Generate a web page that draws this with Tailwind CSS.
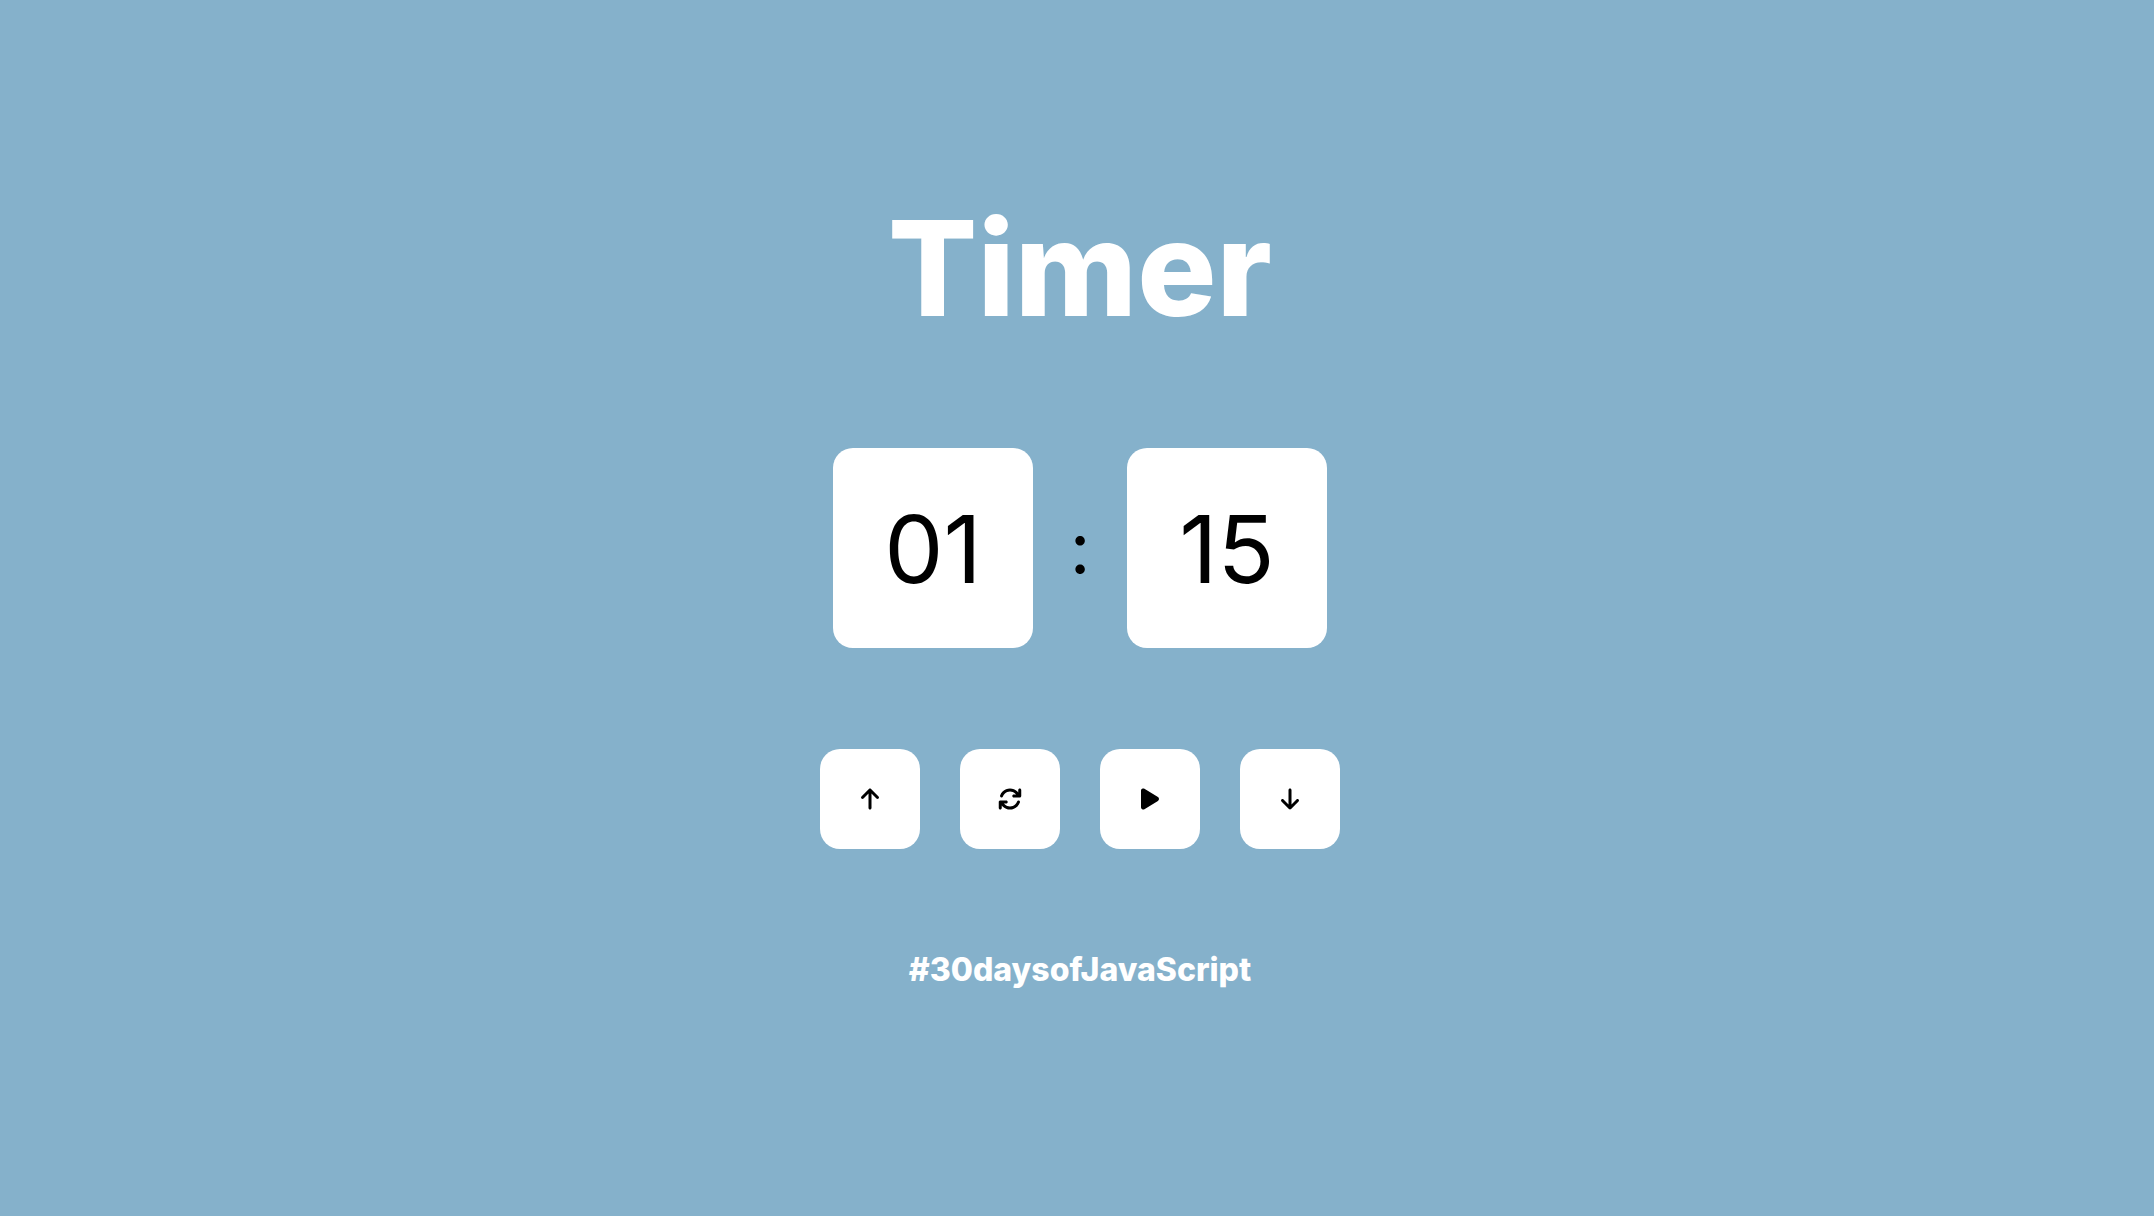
<!DOCTYPE html>
<html lang="en">
<head>
<meta charset="utf-8">
<meta name="viewport" content="width=device-width, initial-scale=1">
<title>Timer</title>
<script src="https://cdn.jsdelivr.net/npm/@tailwindcss/browser@4"></script>
</head>
<body class="min-h-screen bg-[#85b1cb] font-['Inter',sans-serif] text-black">
<main class="flex min-h-screen flex-col items-center pt-48 pl-1.5">
  <h1 class="text-[132px] leading-[152px] font-extrabold text-white">Timer</h1>
  <div role="timer" class="mt-26 flex items-center text-[94px] leading-none">
    <div class="flex size-50 items-center justify-center rounded-[20px] bg-white pt-0.5">01</div>
    <div class="w-[94px] text-center text-[72px]">:</div>
    <div class="flex size-50 items-center justify-center rounded-[20px] bg-white pt-0.5">15</div>
  </div>
  <div class="mt-[101px] flex gap-10">
    <button type="button" aria-label="Increase" class="flex size-25 items-center justify-center rounded-[20px] bg-white">
      <svg class="h-6" viewBox="0 0 384 512" fill="currentColor"><path d="M214.6 41.4c-12.5-12.5-32.8-12.5-45.3 0l-160 160c-12.5 12.5-12.5 32.8 0 45.3s32.8 12.5 45.3 0L160 141.2V448c0 17.7 14.3 32 32 32s32-14.3 32-32V141.2L329.4 246.6c12.5 12.5 32.8 12.5 45.3 0s12.5-32.8 0-45.3l-160-160z"/></svg>
    </button>
    <button type="button" aria-label="Reset" class="flex size-25 items-center justify-center rounded-[20px] bg-white">
      <svg class="h-6" viewBox="0 0 512 512" fill="currentColor"><path d="M105.1 202.6c7.7-21.8 20.2-42.3 37.8-59.8c62.5-62.5 163.8-62.5 226.3 0L386.3 160H336c-17.7 0-32 14.3-32 32s14.3 32 32 32H463.5c0 0 0 0 0 0h.4c17.7 0 32-14.3 32-32V64c0-17.7-14.3-32-32-32s-32 14.3-32 32v51.2L414.4 97.6c-87.5-87.5-229.3-87.5-316.8 0C73.2 122 55.6 150.7 44.8 181.4c-5.9 16.7 2.9 34.9 19.5 40.8s34.9-2.9 40.8-19.5zM39 289.3c-5 1.5-9.8 4.2-13.7 8.2c-4 4-6.7 8.8-8.1 14c-.3 1.2-.6 2.5-.8 3.8c-.3 1.7-.4 3.4-.4 5.1V448c0 17.7 14.3 32 32 32s32-14.3 32-32V396.9l17.6 17.5 0 0c87.5 87.4 229.3 87.4 316.7 0c24.4-24.4 42.1-53.1 52.9-83.7c5.9-16.7-2.9-34.9-19.5-40.8s-34.9 2.9-40.8 19.5c-7.7 21.8-20.2 42.3-37.8 59.8c-62.5 62.5-163.8 62.5-226.3 0l-.1-.1L125.6 352H176c17.7 0 32-14.3 32-32s-14.3-32-32-32H48.4c-1.6 0-3.2 .1-4.8 .3s-3.1 .5-4.6 1z"/></svg>
    </button>
    <button type="button" aria-label="Start" class="flex size-25 items-center justify-center rounded-[20px] bg-white">
      <svg class="h-6" viewBox="0 0 384 512" fill="currentColor"><path d="M73 39c-14.8-9.1-33.4-9.4-48.5-.9S0 62.6 0 80V432c0 17.4 9.4 33.4 24.5 41.9s33.7 8.1 48.5-.9L361 297c14.3-8.7 23-24.2 23-41s-8.7-32.2-23-41L73 39z"/></svg>
    </button>
    <button type="button" aria-label="Decrease" class="flex size-25 items-center justify-center rounded-[20px] bg-white">
      <svg class="h-6" viewBox="0 0 384 512" fill="currentColor"><path d="M169.4 470.6c12.5 12.5 32.8 12.5 45.3 0l160-160c12.5-12.5 12.5-32.8 0-45.3s-32.8-12.5-45.3 0L224 370.8 224 64c0-17.7-14.3-32-32-32s-32 14.3-32 32l0 306.7L54.6 265.4c-12.5-12.5-32.8-12.5-45.3 0s-12.5 32.8 0 45.3l160 160z"/></svg>
    </button>
  </div>
  <p class="mt-25 text-[32px] leading-[42px] font-extrabold text-white">#30daysofJavaScript</p>
</main>
</body>
</html>
